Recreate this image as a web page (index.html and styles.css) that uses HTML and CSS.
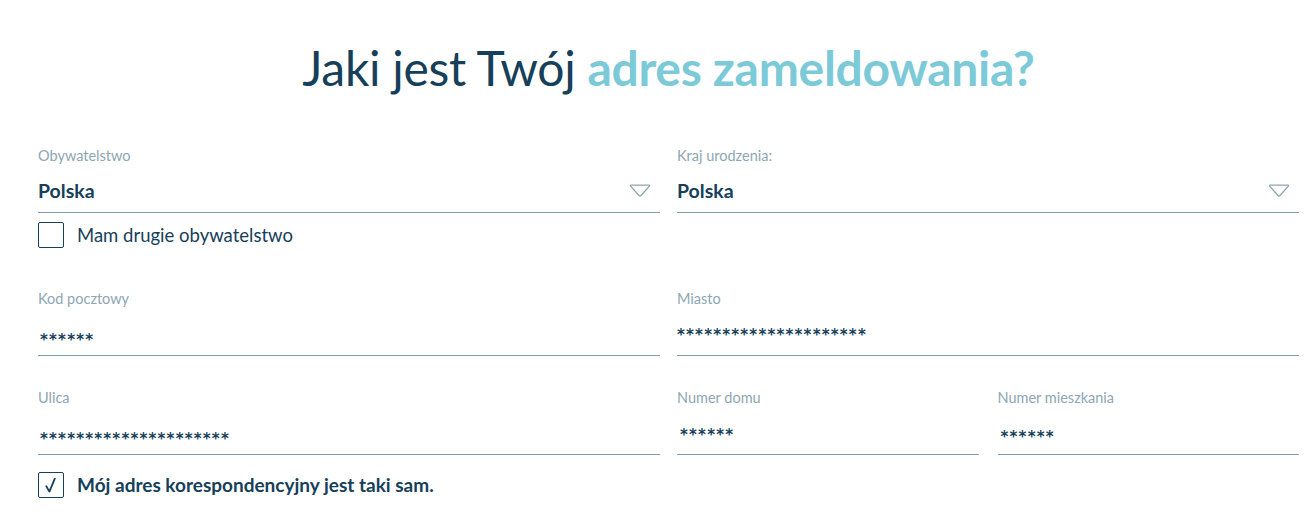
FILE: index.html
```html
<!DOCTYPE html>
<html lang="pl">
<head>
<meta charset="utf-8">
<title>Adres zameldowania</title>
<link rel="stylesheet" href="styles.css">
</head>
<body>
<main class="page">
  <h1 class="title">Jaki jest Twój <strong>adres zameldowania?</strong></h1>

  <div class="row row-first">
    <div class="field field-select">
      <span class="label">Obywatelstwo</span>
      <div class="value value-text">Polska</div>
      <svg class="arrow" viewBox="0 0 22 15" width="22" height="15"><path d="M2 2.2 H20 Q21 2.2 20.4 3.1 L12 12.5 Q11 13.6 10 12.5 L1.6 3.1 Q1 2.2 2 2.2 Z" fill="none" stroke="#8fa3af" stroke-width="1.3" stroke-linejoin="round"/></svg>
    </div>
    <div class="field field-select">
      <span class="label">Kraj urodzenia:</span>
      <div class="value value-text">Polska</div>
      <svg class="arrow" viewBox="0 0 22 15" width="22" height="15"><path d="M2 2.2 H20 Q21 2.2 20.4 3.1 L12 12.5 Q11 13.6 10 12.5 L1.6 3.1 Q1 2.2 2 2.2 Z" fill="none" stroke="#8fa3af" stroke-width="1.3" stroke-linejoin="round"/></svg>
    </div>
  </div>

  <label class="check check-first">
    <span class="box"></span>
    <span class="check-text">Mam drugie obywatelstwo</span>
  </label>

  <div class="row row-second">
    <div class="field">
      <span class="label">Kod pocztowy</span>
      <div class="value value-mask">******</div>
    </div>
    <div class="field">
      <span class="label">Miasto</span>
      <div class="value value-mask value-high">*********************</div>
    </div>
  </div>

  <div class="row row-third">
    <div class="field">
      <span class="label">Ulica</span>
      <div class="value value-mask">*********************</div>
    </div>
    <div class="split">
      <div class="field">
        <span class="label">Numer domu</span>
        <div class="value value-mask value-mid">******</div>
      </div>
      <div class="field">
        <span class="label">Numer mieszkania</span>
        <div class="value value-mask value-low">******</div>
      </div>
    </div>
  </div>

  <label class="check check-second">
    <span class="box box-checked">
      <svg viewBox="0 0 26 26" width="26" height="26"><path d="M8.3 14.2 L11.4 19.6 L16.8 6.6" fill="none" stroke="#16405a" stroke-width="1.8" stroke-linecap="round" stroke-linejoin="round"/></svg>
    </span>
    <span class="check-text check-text-bold">Mój adres korespondencyjny jest taki sam.</span>
  </label>
</main>
</body>
</html>
```

FILE: styles.css
```css
html, body {
  margin: 0;
  padding: 0;
  background: #ffffff;
}

body {
  font-family: "Lato", "Open Sans", "Liberation Sans", sans-serif;
  color: #16405a;
}

.page {
  width: 1308px;
  height: 516px;
  box-sizing: border-box;
  padding: 0 9px 0 38px;
  overflow: hidden;
}

.title {
  margin: 0;
  padding-top: 40px;
  height: 108px;
  box-sizing: border-box;
  text-align: center;
  font-size: 48px;
  line-height: 56px;
  font-weight: 400;
  color: #16405a;
  letter-spacing: -0.3px;
}

.title strong {
  font-weight: 700;
  color: #7ccad8;
}

.row {
  display: grid;
  grid-template-columns: 1fr 1fr;
  column-gap: 17px;
}

.row-first { margin-top: 40px; }
.row-second { margin-top: 43px; }
.row-third { margin-top: 34px; }

.split {
  display: grid;
  grid-template-columns: 1fr 1fr;
  column-gap: 19px;
}

.field {
  position: relative;
  border-bottom: 1px solid #849dab;
}

.label {
  display: block;
  font-size: 14.5px;
  line-height: 16px;
  color: #8ea6b3;
}

.value {
  margin-top: 15px;
  height: 24px;
  padding-bottom: 9px;
  font-size: 19.5px;
  line-height: 24px;
  color: #16405a;
}

.value-text {
  font-weight: 700;
}

.value-mask {
  font-family: "DejaVu Sans", sans-serif;
  font-size: 15px;
  font-weight: 700;
  letter-spacing: 1.2px;
  padding-top: 6px;
  height: 18px;
  padding-left: 2px;
}

.value-high {
  padding-top: 1px;
  height: 23px;
  padding-left: 0;
}

.value-mid {
  padding-top: 2px;
  height: 22px;
  padding-left: 3px;
}

.value-low {
  padding-top: 4px;
  height: 20px;
  padding-left: 3px;
}

.arrow {
  position: absolute;
  right: 9px;
  top: 35px;
}

.check {
  display: flex;
  align-items: center;
  gap: 13px;
}

.check-first { margin-top: 9px; }
.check-second { margin-top: 17px; }

.box {
  width: 26px;
  height: 26px;
  box-sizing: border-box;
  border: 1px solid #16405a;
  border-radius: 2px;
  display: flex;
  align-items: center;
  justify-content: center;
  flex: none;
}

.box svg {
  display: block;
  margin: -1px;
}

.check-text {
  font-size: 18.5px;
  line-height: 26px;
  color: #16405a;
}

.check-text-bold {
  font-size: 19px;
  font-weight: 700;
}
```
